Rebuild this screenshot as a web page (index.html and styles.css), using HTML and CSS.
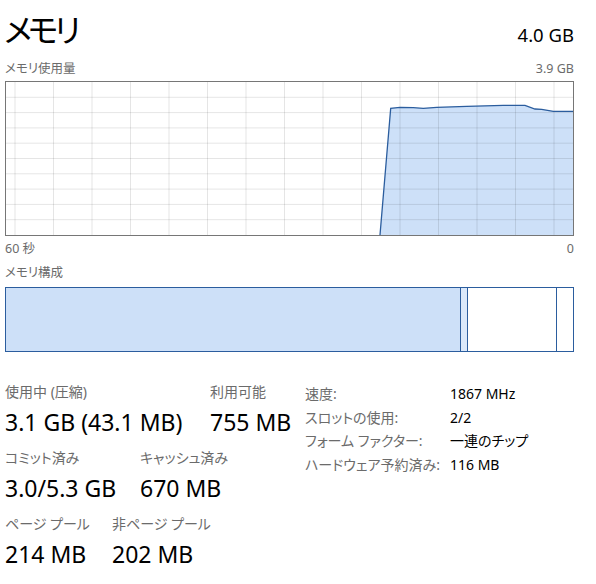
FILE: index.html
```html
<!DOCTYPE html>
<html lang="ja">
<head>
<meta charset="utf-8">
<title>メモリ</title>
<link rel="stylesheet" href="styles.css">
</head>
<body>
<div class="page">
  <div class="header">
    <div class="title">メモリ</div>
    <div class="total">4.0 GB</div>
  </div>
  <div class="caption-row">
    <span>メモリ使用量</span>
    <span>3.9 GB</span>
  </div>
  <div class="graph">
    <svg width="567" height="153" viewBox="0 0 567 153">
      <polygon class="area" points="374,153 384.7,26.3 394,25.3 407.3,25.7 417.3,26.3 430.7,25.3 460.7,24.3 497.3,23.3 519,23.3 529,27 535.7,27.3 547.3,29.3 567,29.3 567,153"/>
      <g class="grid">
        <line x1="9" y1="0" x2="9" y2="153"/>
        <line x1="47.5" y1="0" x2="47.5" y2="153"/>
        <line x1="86" y1="0" x2="86" y2="153"/>
        <line x1="124.5" y1="0" x2="124.5" y2="153"/>
        <line x1="163" y1="0" x2="163" y2="153"/>
        <line x1="201.5" y1="0" x2="201.5" y2="153"/>
        <line x1="240" y1="0" x2="240" y2="153"/>
        <line x1="278.5" y1="0" x2="278.5" y2="153"/>
        <line x1="317" y1="0" x2="317" y2="153"/>
        <line x1="355.5" y1="0" x2="355.5" y2="153"/>
        <line x1="394" y1="0" x2="394" y2="153"/>
        <line x1="432.5" y1="0" x2="432.5" y2="153"/>
        <line x1="471" y1="0" x2="471" y2="153"/>
        <line x1="509.5" y1="0" x2="509.5" y2="153"/>
        <line x1="548" y1="0" x2="548" y2="153"/>
        <line x1="0" y1="15.3" x2="567" y2="15.3"/>
        <line x1="0" y1="30.6" x2="567" y2="30.6"/>
        <line x1="0" y1="45.9" x2="567" y2="45.9"/>
        <line x1="0" y1="61.2" x2="567" y2="61.2"/>
        <line x1="0" y1="76.5" x2="567" y2="76.5"/>
        <line x1="0" y1="91.8" x2="567" y2="91.8"/>
        <line x1="0" y1="107.1" x2="567" y2="107.1"/>
        <line x1="0" y1="122.4" x2="567" y2="122.4"/>
        <line x1="0" y1="137.7" x2="567" y2="137.7"/>
      </g>
      <polyline class="line" points="374,153 384.7,26.3 394,25.3 407.3,25.7 417.3,26.3 430.7,25.3 460.7,24.3 497.3,23.3 519,23.3 529,27 535.7,27.3 547.3,29.3 567,29.3"/>
    </svg>
  </div>
  <div class="axis-row">
    <span>60 秒</span>
    <span>0</span>
  </div>
  <div class="caption-row section">
    <span>メモリ構成</span>
  </div>
  <div class="bar">
    <div class="seg seg-inuse"></div>
    <div class="seg seg-modified"></div>
    <div class="seg seg-standby"></div>
    <div class="seg seg-free"></div>
  </div>

  <div class="stats">
    <div class="stats-left">
      <div class="stat-row">
        <div class="stat w-first">
          <div class="label">使用中 (圧縮)</div>
          <div class="value">3.1 GB (43.1 MB)</div>
        </div>
        <div class="stat">
          <div class="label">利用可能</div>
          <div class="value">755 MB</div>
        </div>
      </div>
      <div class="stat-row">
        <div class="stat w-second">
          <div class="label">コミット済み</div>
          <div class="value">3.0/5.3 GB</div>
        </div>
        <div class="stat">
          <div class="label">キャッシュ済み</div>
          <div class="value">670 MB</div>
        </div>
      </div>
      <div class="stat-row">
        <div class="stat w-third">
          <div class="label">ページ プール</div>
          <div class="value">214 MB</div>
        </div>
        <div class="stat">
          <div class="label">非ページ プール</div>
          <div class="value">202 MB</div>
        </div>
      </div>
    </div>
    <div class="stats-right">
      <div class="prop"><span class="prop-key">速度:</span><span class="prop-val">1867 MHz</span></div>
      <div class="prop"><span class="prop-key">スロットの使用:</span><span class="prop-val">2/2</span></div>
      <div class="prop"><span class="prop-key">フォーム ファクター:</span><span class="prop-val">一連のチップ</span></div>
      <div class="prop"><span class="prop-key">ハードウェア予約済み:</span><span class="prop-val">116 MB</span></div>
    </div>
  </div>
</div>
</body>
</html>
```
FILE: styles.css
```css
html, body {
  margin: 0;
  padding: 0;
  background: #ffffff;
}

body {
  font-family: "Noto Sans", "Noto Sans CJK JP", sans-serif;
  font-feature-settings: "palt";
  color: #000000;
}

.page {
  width: 569px;
  padding-left: 5px;
}

.header {
  display: flex;
  justify-content: space-between;
  align-items: baseline;
  height: 52px;
  padding-top: 10px;
  box-sizing: border-box;
}

.title {
  font-size: 32px;
  line-height: 40px;
  letter-spacing: -4px;
  margin-left: -1px;
}

.total {
  font-size: 18.5px;
  line-height: 40px;
}

.caption-row {
  display: flex;
  justify-content: space-between;
  font-size: 12.5px;
  line-height: 18px;
  color: #6b6b6b;
  margin-top: 8px;
  height: 21px;
}

.caption-row.section {
  margin-top: 6px;
  height: 23px;
}

.graph {
  width: 567px;
  height: 153px;
  border: 1px solid #767676;
}

.graph svg {
  display: block;
}

.grid line {
  stroke: rgba(0, 0, 0, 0.1);
  stroke-width: 1;
}

.area {
  fill: #cde0f8;
}

.line {
  fill: none;
  stroke: #2b5d9e;
  stroke-width: 1.3;
}

.axis-row {
  display: flex;
  justify-content: space-between;
  font-size: 12.5px;
  line-height: 18px;
  color: #6b6b6b;
  margin-top: 4px;
}

.bar {
  display: flex;
  height: 63px;
  border: 1px solid #2b5d9e;
}

.seg {
  border-right: 1px solid #2b5d9e;
  box-sizing: border-box;
}

.seg-inuse {
  width: 455px;
  background: #cde0f8;
}

.seg-modified {
  width: 7px;
  background: #dae8fa;
}

.seg-standby {
  width: 89px;
  background: #ffffff;
}

.seg-free {
  flex: 1;
  border-right: none;
  background: #ffffff;
}

.stats {
  display: flex;
  margin-top: 30px;
}

.stats-left {
  width: 300px;
}

.stat-row {
  display: flex;
  margin-bottom: 10px;
}

.stat.w-first { width: 205px; }
.stat.w-second { width: 135px; }
.stat.w-third { width: 107px; }

.label {
  font-size: 14px;
  line-height: 20px;
  color: #6b6b6b;
}

.value {
  font-size: 23px;
  line-height: 32px;
  margin-top: 4px;
  color: #000000;
}

.stats-right {
  padding-top: 0;
}

.prop {
  display: flex;
  font-size: 14px;
  line-height: 23.6px;
}

.prop-key {
  width: 145px;
  color: #6b6b6b;
}

.prop-val {
  color: #000000;
}
```
